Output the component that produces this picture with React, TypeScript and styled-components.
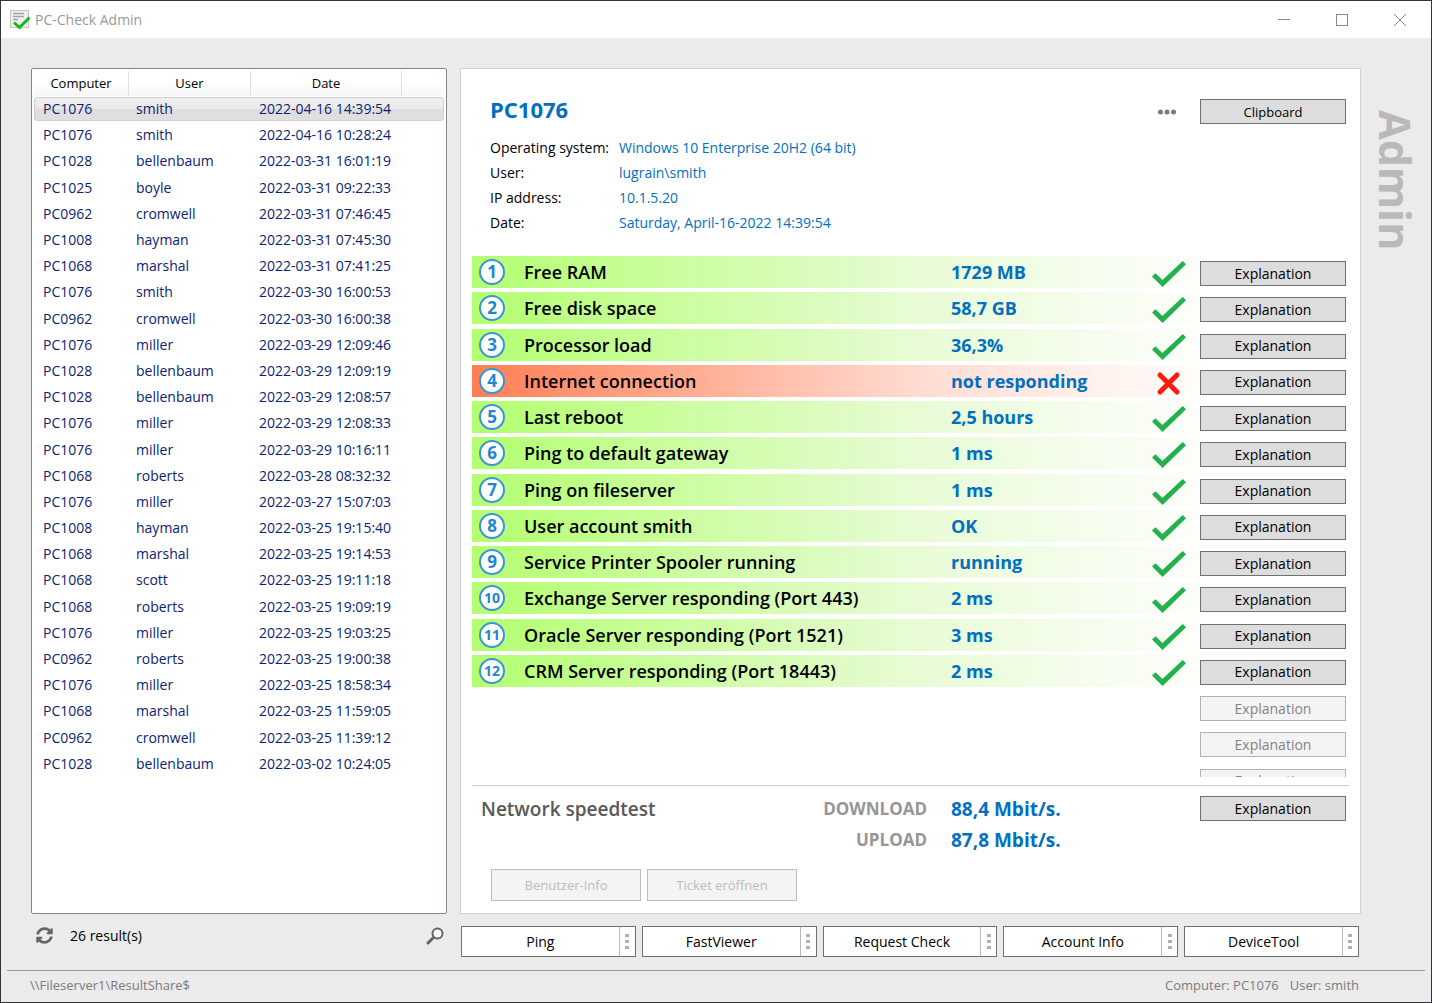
import React, { useState } from "react";
import styled, { createGlobalStyle } from "styled-components";
import { FaSyncAlt } from "react-icons/fa";

const GlobalStyle = createGlobalStyle`
  * { box-sizing: border-box; }
  body {
    margin: 0;
    font-family: "Open Sans", "Noto Sans", sans-serif;
    font-size: 14px;
    line-height: 20px;
    color: #000;
  }
  button { font: inherit; color: inherit; padding: 0; }
`;

const Window = styled.div`
  min-height: 100vh;
  display: flex;
  flex-direction: column;
  background: #ebebeb;
  border: 1px solid #333338;
`;

const TitleBar = styled.header`
  display: flex;
  align-items: center;
  height: 37px;
  padding: 0 2px 0 9px;
  background: #fff;
  color: #999;
`;

const AppTitle = styled.h1`
  flex: 1;
  margin: 0 0 0 4px;
  font-size: 14px;
  font-weight: 400;
`;

const CaptionButton = styled.button`
  display: flex;
  align-items: center;
  justify-content: center;
  width: 58px;
  height: 36px;
  border: 0;
  background: none;
`;

const Workspace = styled.main`
  flex: 1;
  display: grid;
  grid-template-columns: 416px minmax(0, 1fr) 57px;
  grid-template-rows: 1fr auto;
  column-gap: 13px;
  padding: 30px 0 13px 30px;
`;

const ResultList = styled.section`
  padding: 2px;
  background: #fff;
  border: 1px solid #82868f;
  border-radius: 2px;
`;

const Table = styled.table`
  display: block;
  border-spacing: 0;
`;

const TableHead = styled.thead`
  display: block;
`;

const HeadRow = styled.tr`
  display: grid;
  grid-template-columns: 95px 122px 151px 1fr;
  height: 25px;
  background: linear-gradient(#fff 40%, #f6f6f6);
`;

const HeadCell = styled.th`
  padding: 0;
  border-right: 1px solid #dedfe1;
  font-size: 13px;
  font-weight: 400;
  line-height: 24px;
  &:last-child { border-right: 0; }
`;

const Rows = styled.tbody`
  display: grid;
  grid-auto-rows: 1fr;
  height: 682px;
  padding-top: 1px;
`;

const Row = styled.tr<{ $selected: boolean }>`
  display: grid;
  grid-template-columns: 93px 123px 1fr;
  height: 24px;
  border: 1px solid ${(p) => (p.$selected ? "#cfcfcf" : "transparent")};
  border-radius: 3px;
  background: ${(p) => (p.$selected ? "linear-gradient(#efefef, #e9e9e9 48%, #dedede 52%, #dfdfdf)" : "none")};
  color: #0b2372;
  cursor: default;
`;

const Cell = styled.td`
  padding: 0 0 0 8px;
  line-height: 22px;
  white-space: nowrap;
`;

const Details = styled.section`
  display: flex;
  flex-direction: column;
  padding: 30px 11px 12px;
  background: #fff;
  border: 1px solid #d0d1d2;
`;

const Rail = styled.aside`
  display: flex;
  justify-content: center;
  align-items: flex-start;
  padding: 42px 15px 0 0;
`;

const RailText = styled.span`
  writing-mode: vertical-rl;
  font-size: 43px;
  line-height: 48px;
  font-weight: 700;
  color: #b9b9b9;
`;

const DetailsHead = styled.div`
  display: flex;
  align-items: flex-start;
  padding: 0 3px 0 18px;
  height: 24px;
`;

const ComputerName = styled.h2`
  flex: 1;
  margin: 0;
  font-size: 22px;
  line-height: 20px;
  font-weight: 700;
  color: #0070c0;
`;

const MoreButton = styled.button`
  display: flex;
  align-items: center;
  justify-content: center;
  width: 26px;
  height: 25px;
  margin-right: 20px;
  border: 0;
  background: none;
`;

const PushButton = styled.button<{ $small?: boolean }>`
  width: 146px;
  height: 25px;
  border: 1px solid #707070;
  background: #ddd;
  font-size: ${(p) => (p.$small ? 13 : 14)}px;
  &:disabled {
    border-color: #adb2b5;
    background: #f4f4f4;
    color: #838383;
  }
`;

const Facts = styled.dl`
  display: grid;
  grid-template-columns: 129px 1fr;
  grid-auto-rows: 25px;
  align-items: center;
  margin: 12px 0 21px;
  padding-left: 18px;
  white-space: nowrap;
`;

const FactName = styled.dt``;

const FactValue = styled.dd`
  margin: 0;
  color: #0070c0;
`;

const CheckViewport = styled.div`
  height: 521px;
  overflow: hidden;
`;

const CheckList = styled.ol`
  display: grid;
  grid-auto-rows: 1fr;
  height: 544px;
  margin: 0;
  padding: 0 3px 0 0;
  list-style: none;
`;

const CheckRow = styled.li`
  display: grid;
  grid-template-columns: minmax(0, 1fr) 146px;
  column-gap: 2px;
  align-items: start;
`;

const Band = styled.div<{ $tone: "ok" | "bad" | "empty" }>`
  display: grid;
  grid-template-columns: 45px minmax(0, 1fr) 201px 34px;
  align-items: center;
  height: 32px;
  padding: 0 12px 0 7px;
  background: ${(p) =>
    p.$tone === "ok"
      ? "linear-gradient(90deg, #b3ff70, #e8fbd6 62%, #fdfefb)"
      : p.$tone === "bad"
        ? "linear-gradient(90deg, #ff7f55, #ffdcd2 62%, #fffdfb)"
        : "none"};
`;

const CheckName = styled.span`
  font-size: 18px;
  line-height: 24px;
  font-weight: 600;
  white-space: nowrap;
`;

const CheckValue = styled.span`
  font-size: 18px;
  line-height: 24px;
  font-weight: 700;
  color: #0070c0;
  white-space: nowrap;
`;

const ButtonSlot = styled.div`
  padding-top: 5px;
`;

const Speedtest = styled.div`
  display: grid;
  grid-template-columns: minmax(0, 1fr) 120px 249px 146px;
  grid-template-rows: 31px 31px;
  margin-top: 8px;
  padding: 7px 3px 0 9px;
  border-top: 1px solid #d0d0d0;
  align-items: center;
`;

const SpeedTitle = styled.h3`
  margin: 0;
  font-size: 19px;
  line-height: 24px;
  font-weight: 600;
  color: #595959;
`;

const SpeedLabel = styled.span`
  grid-column: 2;
  padding-right: 24px;
  justify-self: end;
  font-size: 17px;
  line-height: 24px;
  font-weight: 700;
  color: #969696;
`;

const SpeedValue = styled.span`
  font-size: 19px;
  line-height: 24px;
  font-weight: 700;
  color: #0070c0;
`;

const TicketBar = styled.div`
  display: flex;
  gap: 6px;
  margin-top: auto;
  padding-left: 19px;
`;

const TicketButton = styled.button`
  width: 150px;
  height: 32px;
  border: 1px solid #bdbdbd;
  background: #f4f4f4;
  font-size: 13px;
  color: #bcbcbc;
`;

const ListFooter = styled.div`
  display: flex;
  align-items: center;
  padding: 0 2px 0 3px;
`;

const IconButton = styled.button`
  display: flex;
  align-items: center;
  justify-content: center;
  width: 20px;
  height: 20px;
  border: 0;
  background: none;
  color: #686464;
`;

const ResultCount = styled.span`
  flex: 1;
  padding-left: 16px;
`;

const ToolBar = styled.div`
  display: flex;
  gap: 6px;
  padding: 12px 2px 0 1px;
`;

const SplitButton = styled.div`
  flex: 1;
  display: flex;
  height: 31px;
  border: 1px solid #707070;
  background: #fff;
`;

const SplitMain = styled.button`
  flex: 1;
  border: 0;
  background: none;
`;

const SplitMore = styled.button`
  display: flex;
  flex-direction: column;
  align-items: center;
  justify-content: center;
  gap: 3px;
  width: 16px;
  border: 0;
  border-left: 1px solid #b9b9b9;
  background: none;
`;

const Grip = styled.i`
  width: 4px;
  height: 3px;
  background: #b0b0b0;
`;

const StatusBar = styled.footer`
  display: flex;
  gap: 11px;
  height: 32px;
  margin: 0 6px;
  padding: 4px 66px 0 23px;
  border-top: 1px solid #999;
  font-size: 13px;
  color: #7b7b7b;
`;

const StatusPath = styled.span`
  flex: 1;
`;

const AppIcon = () => (
  <svg width="21" height="20" viewBox="0 0 21 20" aria-hidden="true">
    <rect x="0.5" y="0.5" width="18" height="17" fill="#efefef" stroke="#c4c4c4" />
    <path d="M3 3.5h11M3 6.5h11M3 9.5h5" stroke="#a3a3a3" strokeWidth="1.5" />
    <path d="M4 12.5l5.5 5L19.5 7.5" fill="none" stroke="#10b81e" strokeWidth="3" />
  </svg>
);

const Tick = () => (
  <svg width="34" height="26" viewBox="0 0 34 26" role="img" aria-label="passed">
    <path d="M0 15.5L3.5 12.2 10.4 19 30.7 0 34 3.3 10.6 26z" fill="#22b14c" />
  </svg>
);

const Cross = () => (
  <svg width="34" height="26" viewBox="0 0 34 26" role="img" aria-label="failed">
    <path d="M8 5l17 17M25 5L8 22" stroke="#ff1a10" strokeWidth="5" strokeLinecap="round" />
  </svg>
);

const Mark = styled.span`
  display: flex;
  padding-top: 4px;
`;

const Badge = styled.span<{ $wide: boolean }>`
  display: flex;
  align-items: center;
  justify-content: center;
  width: 26px;
  height: 26px;
  border: 2px solid #3a94d9;
  border-radius: 50%;
  background: #fff;
  font-size: ${(p) => (p.$wide ? 14 : 17)}px;
  line-height: 20px;
  font-weight: 700;
  color: #1d86d0;
`;

const SearchIcon = () => (
  <svg width="18" height="18" viewBox="0 0 18 18" aria-hidden="true">
    <circle cx="11.5" cy="6.5" r="5" fill="#f8f8f8" stroke="#686464" strokeWidth="2" />
    <path d="M7.5 10.5L2 16" stroke="#686464" strokeWidth="3" strokeLinecap="round" />
  </svg>
);

const results = `PC1076 smith 2022-04-16 14:39:54
PC1076 smith 2022-04-16 10:28:24
PC1028 bellenbaum 2022-03-31 16:01:19
PC1025 boyle 2022-03-31 09:22:33
PC0962 cromwell 2022-03-31 07:46:45
PC1008 hayman 2022-03-31 07:45:30
PC1068 marshal 2022-03-31 07:41:25
PC1076 smith 2022-03-30 16:00:53
PC0962 cromwell 2022-03-30 16:00:38
PC1076 miller 2022-03-29 12:09:46
PC1028 bellenbaum 2022-03-29 12:09:19
PC1028 bellenbaum 2022-03-29 12:08:57
PC1076 miller 2022-03-29 12:08:33
PC1076 miller 2022-03-29 10:16:11
PC1068 roberts 2022-03-28 08:32:32
PC1076 miller 2022-03-27 15:07:03
PC1008 hayman 2022-03-25 19:15:40
PC1068 marshal 2022-03-25 19:14:53
PC1068 scott 2022-03-25 19:11:18
PC1068 roberts 2022-03-25 19:09:19
PC1076 miller 2022-03-25 19:03:25
PC0962 roberts 2022-03-25 19:00:38
PC1076 miller 2022-03-25 18:58:34
PC1068 marshal 2022-03-25 11:59:05
PC0962 cromwell 2022-03-25 11:39:12
PC1028 bellenbaum 2022-03-02 10:24:05`
  .split("\n")
  .map((line) => {
    const [computer, user, day, time] = line.split(" ");
    return { computer, user, date: `${day} ${time}` };
  });

const facts = [
  ["Operating system:", "Windows 10 Enterprise 20H2 (64 bit)"],
  ["User:", "lugrain\\smith"],
  ["IP address:", "10.1.5.20"],
  ["Date:", "Saturday, April-16-2022 14:39:54"],
];

const checks: { name: string; value: string; failed?: boolean }[] = [
  { name: "Free RAM", value: "1729 MB" },
  { name: "Free disk space", value: "58,7 GB" },
  { name: "Processor load", value: "36,3%" },
  { name: "Internet connection", value: "not responding", failed: true },
  { name: "Last reboot", value: "2,5 hours" },
  { name: "Ping to default gateway", value: "1 ms" },
  { name: "Ping on fileserver", value: "1 ms" },
  { name: "User account smith", value: "OK" },
  { name: "Service Printer Spooler running", value: "running" },
  { name: "Exchange Server responding (Port 443)", value: "2 ms" },
  { name: "Oracle Server responding (Port 1521)", value: "3 ms" },
  { name: "CRM Server responding (Port 18443)", value: "2 ms" },
];

const unusedSlots = [13, 14, 15];
const tools = ["Ping", "FastViewer", "Request Check", "Account Info", "DeviceTool"];

export default function App() {
  const [selected, setSelected] = useState(0);

  return (
    <Window>
      <GlobalStyle />
      <TitleBar>
        <AppIcon />
        <AppTitle>PC-Check Admin</AppTitle>
        <CaptionButton aria-label="Minimize">
          <svg width="12" height="12" viewBox="0 0 12 12">
            <path d="M0 5.5h12" stroke="#8a8a8a" />
          </svg>
        </CaptionButton>
        <CaptionButton aria-label="Maximize">
          <svg width="12" height="12" viewBox="0 0 12 12">
            <rect x="0.5" y="0.5" width="11" height="11" fill="none" stroke="#8a8a8a" />
          </svg>
        </CaptionButton>
        <CaptionButton aria-label="Close">
          <svg width="12" height="12" viewBox="0 0 12 12">
            <path d="M0 0l12 12M12 0L0 12" stroke="#8a8a8a" />
          </svg>
        </CaptionButton>
      </TitleBar>

      <Workspace>
        <ResultList>
          <Table>
            <TableHead>
              <HeadRow>
                <HeadCell>Computer</HeadCell>
                <HeadCell>User</HeadCell>
                <HeadCell>Date</HeadCell>
                <HeadCell aria-hidden="true" />
              </HeadRow>
            </TableHead>
            <Rows>
              {results.map((r, i) => (
                <Row key={i} $selected={i === selected} onClick={() => setSelected(i)}>
                  <Cell>{r.computer}</Cell>
                  <Cell>{r.user}</Cell>
                  <Cell>{r.date}</Cell>
                </Row>
              ))}
            </Rows>
          </Table>
        </ResultList>

        <Details>
          <DetailsHead>
            <ComputerName>PC1076</ComputerName>
            <MoreButton aria-label="More">
              <svg width="18" height="6" viewBox="0 0 18 6" fill="#7a7a7a">
                <circle cx="2.5" cy="3" r="2.5" />
                <circle cx="9" cy="3" r="2.5" />
                <circle cx="15.5" cy="3" r="2.5" />
              </svg>
            </MoreButton>
            <PushButton $small>Clipboard</PushButton>
          </DetailsHead>

          <Facts>
            {facts.map(([name, value]) => (
              <React.Fragment key={name}>
                <FactName>{name}</FactName>
                <FactValue>{value}</FactValue>
              </React.Fragment>
            ))}
          </Facts>

          <CheckViewport>
            <CheckList>
              {checks.map((c, i) => (
                <CheckRow key={c.name}>
                  <Band $tone={c.failed ? "bad" : "ok"}>
                    <Badge $wide={i > 8}>{i + 1}</Badge>
                    <CheckName>{c.name}</CheckName>
                    <CheckValue>{c.value}</CheckValue>
                    <Mark>{c.failed ? <Cross /> : <Tick />}</Mark>
                  </Band>
                  <ButtonSlot>
                    <PushButton>Explanation</PushButton>
                  </ButtonSlot>
                </CheckRow>
              ))}
              {unusedSlots.map((slot) => (
                <CheckRow key={slot}>
                  <Band $tone="empty" />
                  <ButtonSlot>
                    <PushButton disabled>Explanation</PushButton>
                  </ButtonSlot>
                </CheckRow>
              ))}
            </CheckList>
          </CheckViewport>

          <Speedtest>
            <SpeedTitle>Network speedtest</SpeedTitle>
            <SpeedLabel>DOWNLOAD</SpeedLabel>
            <SpeedValue>88,4 Mbit/s.</SpeedValue>
            <PushButton>Explanation</PushButton>
            <SpeedLabel>UPLOAD</SpeedLabel>
            <SpeedValue>87,8 Mbit/s.</SpeedValue>
          </Speedtest>

          <TicketBar>
            <TicketButton disabled>Benutzer-Info</TicketButton>
            <TicketButton disabled>Ticket eröffnen</TicketButton>
          </TicketBar>
        </Details>

        <Rail>
          <RailText>Admin</RailText>
        </Rail>

        <ListFooter>
          <IconButton aria-label="Refresh">
            <FaSyncAlt size={17} />
          </IconButton>
          <ResultCount>26 result(s)</ResultCount>
          <IconButton aria-label="Search">
            <SearchIcon />
          </IconButton>
        </ListFooter>

        <ToolBar>
          {tools.map((tool) => (
            <SplitButton key={tool}>
              <SplitMain>{tool}</SplitMain>
              <SplitMore aria-label={`${tool} options`}>
                <Grip />
                <Grip />
                <Grip />
              </SplitMore>
            </SplitButton>
          ))}
        </ToolBar>
      </Workspace>

      <StatusBar>
        <StatusPath>\\Fileserver1\ResultShare$</StatusPath>
        <span>Computer: PC1076</span>
        <span>User: smith</span>
      </StatusBar>
    </Window>
  );
}
